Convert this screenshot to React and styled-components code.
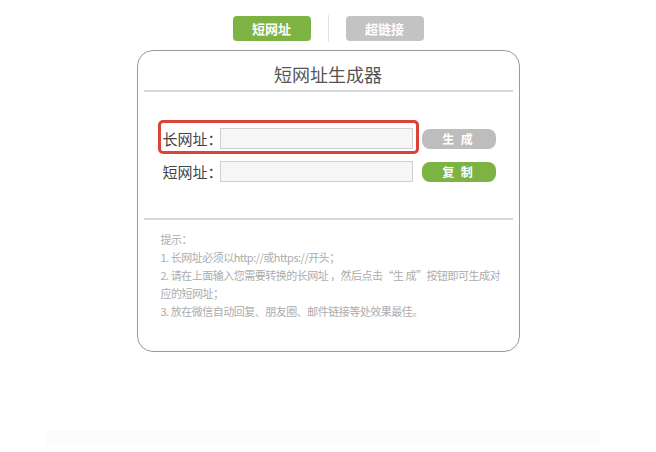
import styled, { createGlobalStyle } from "styled-components";

const GlobalStyle = createGlobalStyle`
  body {
    margin: 0;
    background: #fff;
    font-family: "Noto Sans CJK SC", "Liberation Sans", sans-serif;
  }
`;

const TAB_GREEN = "#7cb342";

export default function App() {
  return (
    <>
      <GlobalStyle />
      <Page>
        <Tabs>
          <Tab $active>短网址</Tab>
          <TabDivider />
          <Tab>超链接</Tab>
        </Tabs>

        <Card>
          <Title>短网址生成器</Title>
          <Rule />

          <Form>
            <Row>
              <Field $highlight>
                <Label>长网址：</Label>
                <Input />
              </Field>
              <Button>生 成</Button>
            </Row>
            <Row>
              <Field>
                <Label>短网址：</Label>
                <Input />
              </Field>
              <Button $green>复 制</Button>
            </Row>
          </Form>

          <Rule $gap />

          <Tips>
            <li>提示：</li>
            <li>1. 长网址必须以http://或https://开头；</li>
            <li>
              2. 请在上面输入您需要转换的长网址 ，然后点击“生 成”按钮即可生成对
              <br />
              应的短网址；
            </li>
            <li>3. 放在微信自动回复、朋友圈、邮件链接等处效果最佳。</li>
          </Tips>
        </Card>

        <Footer />
      </Page>
    </>
  );
}

let Page = styled.div`
  width: 656px;
  min-height: 452px;
  padding-top: 15px;
  box-sizing: border-box;
  display: flex;
  flex-direction: column;
  align-items: center;
`;

let Tabs = styled.div`
  display: flex;
  align-items: center;
  gap: 17px;
`;

let Tab = styled.div`
  width: 78px;
  height: 25px;
  border-radius: 4px;
  background: ${(p) => (p.$active ? TAB_GREEN : "#c3c3c3")};
  color: #fff;
  font-size: 13px;
  font-weight: bold;
  display: flex;
  align-items: center;
  justify-content: center;
`;

let TabDivider = styled.div`
  width: 1px;
  height: 27px;
  background: #e2e2e2;
`;

let Card = styled.div`
  margin-top: 8px;
  width: 383px;
  box-sizing: border-box;
  border: 1px solid #9a9a9a;
  border-radius: 16px;
  padding: 0 6px 31px;
`;

let Title = styled.div`
  height: 39px;
  line-height: 46px;
  text-align: center;
  color: #555;
  font-size: 18px;
`;

let Rule = styled.div`
  height: 2px;
  background: #d9d9d9;
  margin-top: ${(p) => (p.$gap ? "36px" : "0")};
`;

let Form = styled.div`
  margin-top: 36px;
  padding-left: 19px;
  display: flex;
  flex-direction: column;
  gap: 12px;
`;

let Row = styled.div`
  display: flex;
  align-items: center;
  gap: 9px;
  height: 21px;
`;

let Field = styled.div`
  position: relative;
  display: flex;
  align-items: center;
  height: 21px;

  &::before {
    content: "";
    display: ${(p) => (p.$highlight ? "block" : "none")};
    position: absolute;
    left: -5px;
    top: -8px;
    right: -6px;
    bottom: -5px;
    border: 3px solid #d9433a;
    border-radius: 5px;
    pointer-events: none;
  }
`;

let Label = styled.span`
  width: 57px;
  font-size: 15px;
  line-height: 21px;
  color: #444;
  white-space: nowrap;
`;

let Input = styled.input`
  width: 193px;
  height: 21px;
  box-sizing: border-box;
  border: 1px solid #cfcfcf;
  background: #f6f6f6;
  outline: none;
`;

let Button = styled.div`
  width: 74px;
  height: 20px;
  border-radius: 8px;
  background: ${(p) => (p.$green ? TAB_GREEN : "#bdbdbd")};
  color: #fff;
  font-size: 12px;
  font-weight: bold;
  letter-spacing: 2px;
  display: flex;
  align-items: center;
  justify-content: center;
`;

let Tips = styled.ul`
  list-style: none;
  margin: 10px 0 0;
  padding: 0 0 0 17px;
  color: #acacac;
  font-size: 11px;
  line-height: 18px;
  letter-spacing: -0.5px;
  white-space: nowrap;
`;

let Footer = styled.div`
  margin-top: 78px;
  margin-right: 10px;
  width: 554px;
  height: 15px;
  background: #fbfbfb;
`;
